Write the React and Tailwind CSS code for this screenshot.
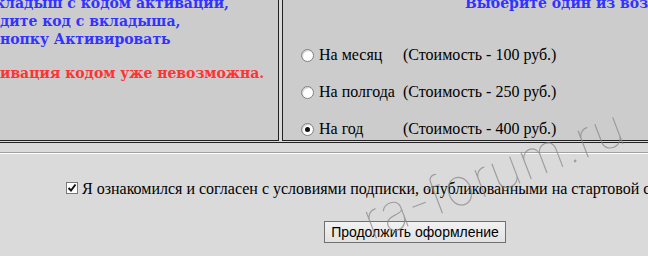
export default function App() {
  const plans = [
    { label: "На месяц", price: "(Стоимость - 100 руб.)", checked: false },
    { label: "На полгода", price: "(Стоимость - 250 руб.)", checked: false },
    { label: "На год", price: "(Стоимость - 400 руб.)", checked: true },
  ];

  return (
    <div className="relative h-[256px] w-[648px] overflow-hidden bg-[#dadada]">
      {/* top table */}
      <div className="flex h-[143px] gap-[3px] border-b border-[#222] pb-px">
        <div className="w-[279px] shrink-0 overflow-hidden whitespace-nowrap border-r border-b border-[#222] bg-[#cccccc] font-['DejaVu_Serif',serif] text-[14px] font-bold leading-[18px]">
          <div className="mt-[-6px] text-[#3333ff]">
            <div className="ml-[-5px]">кладыш с кодом активации,</div>
            <div>дите код с вкладыша,</div>
            <div>нопку Активировать</div>
          </div>
          <div className="mt-[16px] text-[#ff3333]">ивация кодом уже невозможна.</div>
        </div>

        <div className="min-w-0 flex-1 overflow-hidden whitespace-nowrap border-l border-b border-[#222] bg-[#cccccc]">
          <div className="mt-[-6px] pl-[182px] font-['DejaVu_Serif',serif] text-[14px] font-bold leading-[18px] text-[#3333ff]">
            Выберите один из возможных вариантов
          </div>
          <div className="mt-[33px] flex flex-col gap-[17px] pl-[18px] font-['Liberation_Serif',serif] text-[16px] leading-[20px] text-black">
            {plans.map((p) => (
              <div key={p.label} className="flex h-[20px] items-center">
                <span className="flex h-[13px] w-[13px] items-center justify-center rounded-full border border-[#808080] bg-white shadow-[inset_1px_1px_1px_rgba(0,0,0,0.2)]">
                  {p.checked && <span className="h-[5px] w-[5px] rounded-full bg-[#111]" />}
                </span>
                <span className="ml-[5px] inline-block w-[84px]">{p.label}</span>
                <span>{p.price}</span>
              </div>
            ))}
          </div>
        </div>
      </div>

      {/* separator */}
      <div className="h-[9px]" />
      <div className="h-[2px] border-t border-b border-t-[#a0a0a0] border-b-white" />

      {/* agreement */}
      <div className="flex items-start whitespace-nowrap pl-[66px] pt-[25px] font-['Liberation_Serif',serif] text-[16px] leading-[20px] text-black">
        <span className="mt-[3px] flex h-[12px] w-[12px] shrink-0 items-center justify-center border border-[#7a7a7a] bg-white">
          <svg width="10" height="10" viewBox="0 0 10 10">
            <path d="M1.5 5 L4 7.5 L8.5 1.5" fill="none" stroke="#111" strokeWidth="2" />
          </svg>
        </span>
        <span className="ml-[4px]">
          Я ознакомился и согласен с условиями подписки, опубликованными на стартовой странице сайта
        </span>
      </div>

      <div className="mt-[20px] pl-[324px]">
        <button className="h-[22px] w-[182px] border border-[#707070] bg-gradient-to-b from-[#f2f2f2] to-[#e2e2e2] font-['Liberation_Sans',sans-serif] text-[14px] leading-none text-black">
          Продолжить оформление
        </button>
      </div>

      {/* watermark */}
      <span className="pointer-events-none absolute left-[374px] top-[196px] origin-bottom-left -rotate-[21deg] whitespace-nowrap font-['Inter',sans-serif] text-[52px] font-thin leading-none tracking-[1px] text-[#8a8a8a] opacity-75">
        ra-forum.ru
      </span>
    </div>
  );
}
